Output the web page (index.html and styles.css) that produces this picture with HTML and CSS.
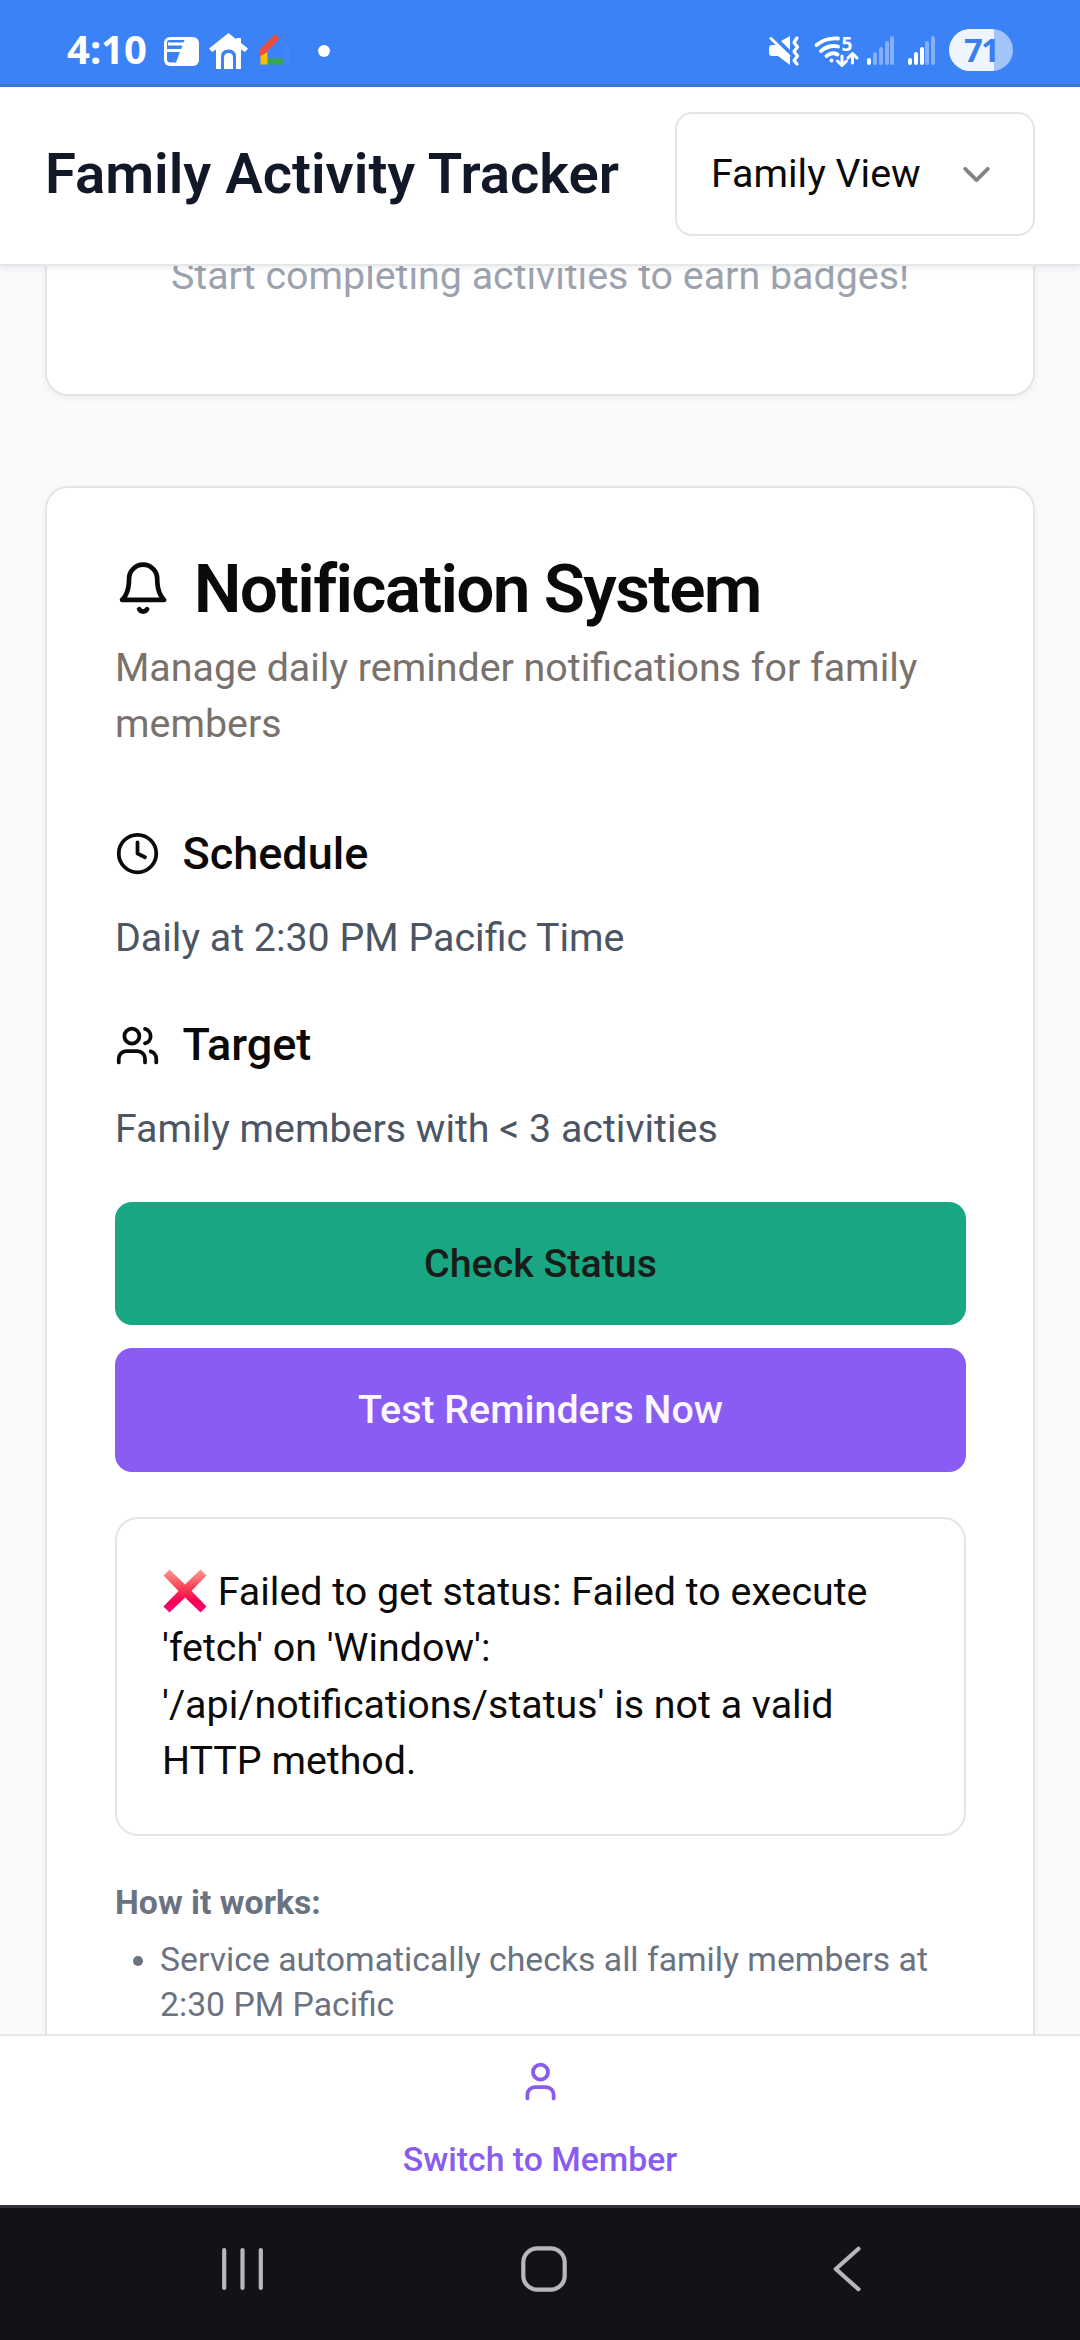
FILE: index.html
```html
<!DOCTYPE html>
<html lang="en">
<head>
<meta charset="utf-8">
<title>Family Activity Tracker</title>
<link rel="stylesheet" href="styles.css">
</head>
<body>
<div class="statusbar">
  <span class="time">4:10</span>
  <svg class="status-left" width="200" height="84" viewBox="160 0 200 84">
    <rect x="164" y="37" width="35" height="29" rx="6" fill="#fff"/>
    <path d="M169.500 40H184.500L176 62.500H170.500Q167 62.500 167 59.500V42.500Q167 40 169.500 40Z" fill="#3b82f6"/>
    <path d="M168 44H184M166 50.500H181" stroke="#fff" stroke-width="3" fill="none"/>
    <path d="M228.500 33L209 48.500L212 52L216 49.500V69H221V57Q221 49.500 228.500 49.500Q236 49.500 236 57V69H241V49.500L245 52L248 48.500L241 43V38H236.500V39.500Z" fill="#fff"/>
    <path d="M224 69V58Q224 53 228.500 53Q233 53 233 58V69Z" fill="#fff"/>
    <path d="M277.500 37L287 47.500V64" stroke="#4285f4" stroke-width="5" fill="none"/>
    <path d="M267 61.500H284" stroke="#34a853" stroke-width="6"/>
    <path d="M264 50V64.500" stroke="#fbbc04" stroke-width="7"/>
    <path d="M260 49L275 34L279.500 38.500L266 53L260 56Z" fill="#ea4e43"/>
    <circle cx="324" cy="51" r="6" fill="#fff"/>
  </svg>
  <span class="grow"></span>
  <svg class="status-right" width="180" height="84" viewBox="765 0 180 84">
    <g fill="#fff">
      <path d="M772 45H777L790 58V65L778 56H772Q769 56 769 53V48Q769 45 772 45ZM781 41L790 36V50Z"/>
      <path d="M771 38.500L789 56" stroke="#fff" stroke-width="3" stroke-linecap="round"/>
    </g>
    <path d="M797 38L794 42.500L797.500 47L794 51.500L797.500 56L794 60.500L797 64" stroke="#fff" stroke-width="3.200" fill="none" stroke-linecap="round" stroke-linejoin="round"/>
    <g stroke="#fff" stroke-width="3.800" fill="none" stroke-linecap="round">
      <path d="M816.500 45Q826 37.500 838 38.500"/><path d="M821 51Q829 44.500 838 46.500"/><path d="M826.500 56Q832 51.500 837.500 54.500"/>
      <path d="M842 56V65M837.500 61L842 65.500L846.500 61M852.500 63V54M848 58L852.500 53.500L857 58" stroke-width="3" stroke-linejoin="round"/>
    </g>
    <circle cx="831.500" cy="60.500" r="2" fill="#fff"/>
    <text class="wifi-gen" x="841.500" y="50.500">5</text>
    <g stroke-width="4" stroke-linecap="round" stroke="#85b0f9">
      <path d="M875 54V63M881 49V63M887 43V63M892 38V63M927 43V63M933 38V63"/>
      <path stroke="#fff" d="M869 60V63M910 60V63M916 54V63M922 49V63"/>
    </g>
  </svg>
  <span class="battery">71</span>
</div>

<header class="header">
  <h1 class="title">Family Activity Tracker</h1>
  <div class="select">
    <span>Family View</span>
    <svg class="icon icon-md chevron" viewBox="0 0 24 24"><path d="m6 9 6 6 6-6"/></svg>
  </div>
</header>

<main class="content">
  <section class="card badges"><p class="hint">Start completing activities to earn badges!</p></section>
  <section class="card notifications">
    <h2 class="card-title"><svg class="icon icon-lg" viewBox="0 0 24 24"><path d="M6 8a6 6 0 0 1 12 0c0 7 3 9 3 9H3s3-2 3-9"/><path d="M10.300 21a1.940 1.940 0 0 0 3.400 0"/></svg>Notification System</h2>
    <p class="description">Manage daily reminder notifications for family members</p>
    <div class="facts">
      <div class="fact">
        <h3 class="fact-title"><svg class="icon icon-md" viewBox="0 0 24 24"><circle cx="12" cy="12" r="10"/><path d="M12 6v6l4 2"/></svg>Schedule</h3>
        <p class="fact-text">Daily at 2:30 PM Pacific Time</p>
      </div>
      <div class="fact">
        <h3 class="fact-title"><svg class="icon icon-md" viewBox="0 0 24 24"><path d="M16 21v-2a4 4 0 0 0-4-4H6a4 4 0 0 0-4 4v2"/><circle cx="9" cy="7" r="4"/><path d="M22 21v-2a4 4 0 0 0-3-3.870"/><path d="M16 3.130a4 4 0 0 1 0 7.750"/></svg>Target</h3>
        <p class="fact-text">Family members with &lt; 3 activities</p>
      </div>
    </div>
    <div class="actions">
      <button class="button check">Check Status</button>
      <button class="button test">Test Reminders Now</button>
    </div>
    <div class="alert">
      <svg class="cross" viewBox="0 0 44 44"><defs><linearGradient id="red" x1="0" y1="0" x2="0" y2="1"><stop offset="0" stop-color="#ff9a8d"/><stop offset=".5" stop-color="#f9304f"/><stop offset=".75" stop-color="#f50052"/><stop offset="1" stop-color="#fa0a83"/></linearGradient></defs><path fill="url(#red)" d="M6.500 .5L22 15.500L37.500 .5L43.500 6.500L28.500 22L43.500 37.500L37.500 43.500L22 28.500L6.500 43.500L.5 37.500L15.500 22L.5 6.500Z"/></svg>
      Failed to get status: Failed to execute 'fetch' on 'Window': '/api/notifications/status' is not a valid HTTP method.
    </div>
    <div class="how">
      <p class="how-title">How it works:</p>
      <ul class="how-list"><li>Service automatically checks all family members at 2:30 PM Pacific</li></ul>
    </div>
  </section>
</main>

<footer class="tabbar">
  <svg class="icon icon-md" viewBox="0 0 24 24"><path d="M19 21v-2a4 4 0 0 0-4-4H9a4 4 0 0 0-4 4v2"/><circle cx="12" cy="7" r="4"/></svg>
  <span>Switch to Member</span>
</footer>

<nav class="navbar">
  <svg width="41" height="46" viewBox="0 0 41 46"><path d="M2.200 4V42M20.500 4V42M38.800 4V42"/></svg>
  <svg class="home" width="46" height="46" viewBox="0 0 46 46"><rect x="2.300" y="2.300" width="41.400" height="41.400" rx="14"/></svg>
  <svg class="back" width="28" height="46" viewBox="0 0 28 46"><path d="M25.500 2.800L2.800 23L25.500 43.200"/></svg>
</nav>
</body>
</html>
```

FILE: styles.css
```css
* { box-sizing: border-box; margin: 0; padding: 0; }

body {
  width: 1080px;
  height: 2340px;
  display: flex;
  flex-direction: column;
  overflow: hidden;
  background: #f9fafb;
  color: #0c0a09;
  font-family: Roboto, sans-serif;
  font-size: 39.375px;
  line-height: 56.25px;
}

.grow { flex: 1; }

.icon {
  flex: none;
  fill: none;
  stroke: currentColor;
  stroke-width: 2;
  stroke-linecap: round;
  stroke-linejoin: round;
}
.icon-md { width: 45px; height: 45px; }
.icon-lg { width: 56.25px; height: 56.25px; }

/* System status bar */
.statusbar {
  flex: none;
  height: 87px;
  display: flex;
  align-items: flex-start;
  padding: 0 67px;
  background: #3b82f6;
  border-bottom: 3px solid #3876da;
  color: #fff;
}
.time {
  width: 93px;
  padding-top: 21px;
  font: 700 40px/56px "Noto Sans", sans-serif;
}
.wifi-gen { fill: #fff; font: 700 19px "Noto Sans", sans-serif; }
.battery {
  width: 64px;
  height: 42px;
  margin: 29px 0 0 4px;
  border-radius: 21px;
  background: linear-gradient(90deg, #eff5ff 45px, #a3c4fb 45px);
  color: #3b7ef0;
  font: 700 33px/42px "Noto Sans", sans-serif;
  text-align: center;
  letter-spacing: -2px;
}

/* App header */
.header {
  flex: none;
  height: 179px;
  display: flex;
  align-items: flex-start;
  justify-content: space-between;
  padding: 25px 45px 0;
  background: #fff;
  border-bottom: 2px solid #e5e7eb;
  box-shadow: 0 3px 6px rgba(0, 0, 0, .06);
  position: relative;
}
.title {
  color: #111827;
  font-size: 56.25px;
  font-weight: 600;
  line-height: 125px;
}
.select {
  width: 360px;
  height: 124px;
  display: flex;
  align-items: center;
  justify-content: space-between;
  padding: 0 34px;
  border: 2px solid #e5e5e5;
  border-radius: 17px;
}
.chevron { opacity: .5; }

/* Scrolling content */
.content { flex: 1; min-height: 0; overflow: hidden; }
.card {
  margin: 0 45px;
  background: #fff;
  border: 2px solid #e7e5e4;
  border-radius: 23px;
  box-shadow: 0 3px 6px rgba(0, 0, 0, .05);
}
.badges {
  height: 190px;
  margin-top: -60px;
  padding-top: 40px;
  color: #9ca3af;
  text-align: center;
}
.notifications { margin-top: 90px; padding: 66.5px 67px 67px 68px; }
.card-title {
  display: flex;
  align-items: center;
  gap: 22.5px;
  font-size: 67.5px;
  font-weight: 600;
  line-height: 67.5px;
  letter-spacing: -.025em;
}
.description { margin-top: 18px; color: #78716c; }
.facts {
  display: grid;
  gap: 45px;
  margin: 67.5px 0 44px;
}
.fact { display: grid; gap: 22.5px; }
.fact-title {
  display: flex;
  align-items: center;
  gap: 22.5px;
  font-size: 45px;
  font-weight: 500;
  line-height: 67.5px;
}
.fact-text { color: #4b5563; }

.actions { display: grid; gap: 22.5px; }
.button {
  height: 123.75px;
  padding-top: 1px;
  border: 0;
  border-radius: 17px;
  font: 500 39.375px/56.25px Roboto, sans-serif;
}
.check { background: #19a683; color: #191c18; }
.test { background: #895cf4; color: #faf7ff; }

.alert {
  margin-top: 45px;
  padding: 45.5px 45px 44.5px;
  border: 2px solid #e5e5e5;
  border-radius: 23px;
}
.cross { width: 44px; height: 44px; margin: 0 1px 0 1px; vertical-align: -8px; }

.how {
  margin-top: 44px;
  color: #6b7280;
  font-size: 33.75px;
  line-height: 45px;
}
.how-title { margin-bottom: 12px; font-weight: 700; }
.how-list { padding-left: 45px; }

/* Bottom action bar */
.tabbar {
  flex: none;
  height: 171px;
  display: flex;
  flex-direction: column;
  align-items: center;
  gap: 33px;
  padding-top: 23px;
  background: #fff;
  border-top: 2px solid #e5e7eb;
  color: #895cf0;
  font-size: 33.75px;
  font-weight: 500;
  line-height: 45px;
}

/* System navigation bar */
.navbar {
  flex: none;
  height: 135px;
  display: flex;
  align-items: flex-start;
  padding: 38px 0 0 222px;
  background: #121318;
  border-top: 3px solid #313237;
}
.navbar svg { fill: none; stroke: #b8b8ba; stroke-width: 4.200; stroke-linecap: round; stroke-linejoin: round; }
.home { margin-left: 258px; }
.back { margin-left: 266px; }
```
